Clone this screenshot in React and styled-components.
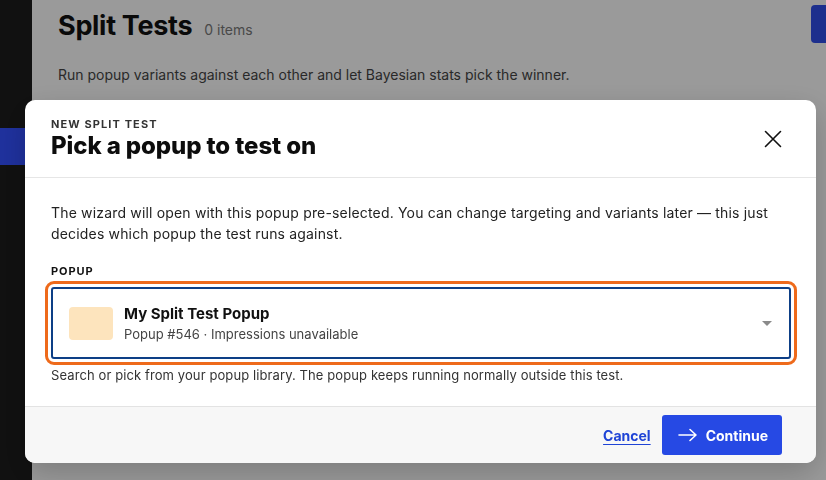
import styled, { createGlobalStyle } from 'styled-components';

const GlobalStyle = createGlobalStyle`
  * { box-sizing: border-box; }
  html, body {
    margin: 0;
    padding: 0;
    width: 100%;
    height: 100%;
    overflow: hidden;
  }
  body {
    font-family: Inter, 'Noto Sans', 'Liberation Sans', sans-serif;
    color: #1a1a1a;
    background: #fff;
  }
`;

const Page = styled.div`
  display: flex;
  width: 826px;
  height: 480px;
`;

const Sidebar = styled.aside`
  width: 32px;
  background: #1c1c1c;
  padding-top: 128px;
`;

const SideItem = styled.div`
  height: 37px;
  width: 32px;
  background: #3350ff;
`;

const Main = styled.main`
  flex: 1;
  display: flex;
  justify-content: space-between;
  align-items: flex-start;
  background: #fafafa;
  padding: 5px 0 0 26px;
`;

const HeaderBlock = styled.div`
  display: flex;
  flex-direction: column;
  gap: 24px;
`;

const TitleRow = styled.div`
  display: flex;
  align-items: baseline;
  gap: 12px;
  padding-top: 5px;
`;

const PageTitle = styled.h1`
  margin: 0;
  font-size: 27px;
  font-weight: 700;
  letter-spacing: -0.3px;
  color: #111;
  line-height: 32px;
`;

const Count = styled.span`
  font-size: 14px;
  color: #777;
`;

const Lead = styled.p`
  margin: 0;
  font-size: 14px;
  color: #444;
`;

const TopButton = styled.div`
  width: 15px;
  height: 38px;
  border-radius: 4px 0 0 4px;
  background: #2f4de6;
`;

const Overlay = styled.div`
  position: fixed;
  inset: 0;
  background: rgba(0, 0, 0, 0.385);
  padding: 100px 0 0 25px;
`;

const Modal = styled.div`
  width: 791px;
  background: #fff;
  border-radius: 10px;
  overflow: hidden;
  box-shadow: 0 10px 30px rgba(0, 0, 0, 0.2);
`;

const ModalHeader = styled.header`
  display: flex;
  justify-content: space-between;
  align-items: center;
  padding: 17px 34px 16px 26px;
  border-bottom: 1px solid #e6e6e6;
`;

const Eyebrow = styled.div`
  font-size: 11px;
  font-weight: 700;
  letter-spacing: 1.1px;
  color: #333;
  text-transform: uppercase;
  line-height: 14px;
`;

const ModalTitle = styled.h2`
  margin: 0;
  font-size: 24px;
  font-weight: 800;
  letter-spacing: -0.1px;
  color: #0d0d0d;
  line-height: 30px;
`;

const CloseButton = styled.button`
  border: none;
  background: none;
  padding: 0;
  width: 18px;
  height: 18px;
  display: flex;
  cursor: pointer;
  color: #111;
`;

const ModalBody = styled.div`
  padding: 24px 25px 23px 26px;
`;

const Intro = styled.p`
  margin: 0 0 20px;
  font-size: 14px;
  line-height: 21px;
  letter-spacing: 0.17px;
  color: #222;
`;

const FieldLabel = styled.div`
  font-size: 11px;
  font-weight: 700;
  letter-spacing: 0.9px;
  color: #111;
  line-height: 14px;
  margin-bottom: 9px;
`;

const Select = styled.div`
  display: flex;
  align-items: center;
  gap: 11px;
  height: 72px;
  padding: 0 16px;
  border: 2px solid #0d3f86;
  border-radius: 3px;
  outline: 3px solid #ee6a1b;
  outline-offset: 3px;
  cursor: pointer;
`;

const Thumb = styled.div`
  width: 44px;
  height: 33px;
  border-radius: 4px;
  background: ${(p) => p.$color};
`;

const SelectText = styled.div`
  flex: 1;
  display: flex;
  flex-direction: column;
  gap: 3px;
`;

const OptionName = styled.div`
  font-size: 15px;
  font-weight: 700;
  color: #111;
  line-height: 19px;
`;

const OptionMeta = styled.div`
  font-size: 13px;
  color: #444;
  line-height: 16px;
`;

const Caret = styled.span`
  width: 0;
  height: 0;
  border-left: 5px solid transparent;
  border-right: 5px solid transparent;
  border-top: 5px solid #8a8a8a;
  margin-right: 1px;
`;

const Help = styled.p`
  margin: 8px 0 0;
  font-size: 13px;
  line-height: 16px;
  letter-spacing: 0.1px;
  color: #333;
`;

const ModalFooter = styled.footer`
  display: flex;
  justify-content: flex-end;
  align-items: center;
  gap: 11px;
  height: 57px;
  padding: 0 34px 0 26px;
  background: #f7f7f7;
  border-top: 1px solid #e3e3e3;
`;

const LinkButton = styled.button`
  border: none;
  background: none;
  padding: 0;
  font-family: inherit;
  font-size: 14px;
  font-weight: 700;
  color: #1f44d6;
  text-decoration: underline;
  text-underline-offset: 3px;
  cursor: pointer;
`;

const PrimaryButton = styled.button`
  display: flex;
  align-items: center;
  gap: 8px;
  height: 40px;
  padding: 0 14px 0 16px;
  border: none;
  border-radius: 3px;
  background: #2649e4;
  color: #fff;
  font-family: inherit;
  font-size: 14px;
  font-weight: 700;
  cursor: pointer;
`;

const App = () => (
  <>
    <GlobalStyle />
    <Page>
      <Sidebar>
        <SideItem />
      </Sidebar>
      <Main>
        <HeaderBlock>
          <TitleRow>
            <PageTitle>Split Tests</PageTitle>
            <Count>0 items</Count>
          </TitleRow>
          <Lead>Run popup variants against each other and let Bayesian stats pick the winner.</Lead>
        </HeaderBlock>
        <TopButton />
      </Main>
    </Page>
    <Overlay>
      <Modal>
        <ModalHeader>
          <div>
            <Eyebrow>New split test</Eyebrow>
            <ModalTitle>Pick a popup to test on</ModalTitle>
          </div>
          <CloseButton aria-label="Close">
            <svg width="18" height="18" viewBox="0 0 18 18" fill="none" stroke="currentColor" strokeWidth="1.6" strokeLinecap="round">
              <path d="M1.5 1.5 L16.5 16.5 M16.5 1.5 L1.5 16.5" />
            </svg>
          </CloseButton>
        </ModalHeader>
        <ModalBody>
          <Intro>
            The wizard will open with this popup pre-selected. You can change targeting and variants later — this just decides which popup the test runs against.
          </Intro>
          <FieldLabel>POPUP</FieldLabel>
          <Select>
            <Thumb $color="#fde4bd" />
            <SelectText>
              <OptionName>My Split Test Popup</OptionName>
              <OptionMeta>Popup #546 · Impressions unavailable</OptionMeta>
            </SelectText>
            <Caret />
          </Select>
          <Help>Search or pick from your popup library. The popup keeps running normally outside this test.</Help>
        </ModalBody>
        <ModalFooter>
          <LinkButton>Cancel</LinkButton>
          <PrimaryButton>
            <svg width="20" height="14" viewBox="0 0 20 14" fill="none" stroke="currentColor" strokeWidth="1.6" strokeLinecap="round" strokeLinejoin="round">
              <path d="M1 7 H18 M12 1.5 L18 7 L12 12.5" />
            </svg>
            Continue
          </PrimaryButton>
        </ModalFooter>
      </Modal>
    </Overlay>
  </>
);

export default App;
